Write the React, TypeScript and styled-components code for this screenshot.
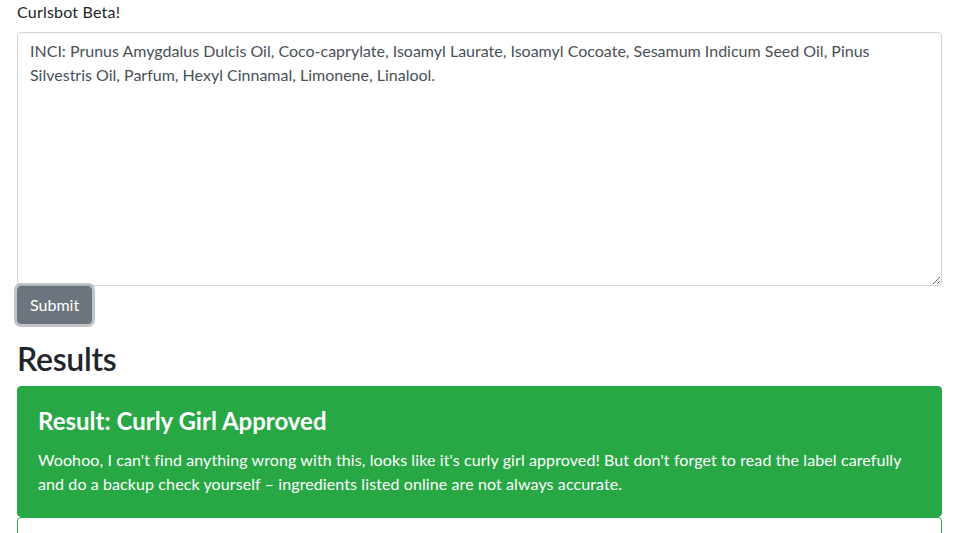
import React, { useState } from 'react';
import styled, { createGlobalStyle } from 'styled-components';

const GlobalStyle = createGlobalStyle`
  * {
    box-sizing: border-box;
  }

  body {
    margin: 0;
    font-family: Lato, "Noto Sans", sans-serif;
    font-size: 16px;
    line-height: 1.5;
    color: #212529;
    background-color: #ffffff;
  }
`;

const Page = styled.div`
  padding: 0 12px 0 17px;
`;

const Title = styled.div`
  margin-bottom: 8px;
  letter-spacing: 0.2px;
`;

const IngredientsInput = styled.textarea`
  display: block;
  width: 100%;
  height: 254px;
  padding: 6px 12px;
  margin: 0;
  font-family: inherit;
  font-size: 16px;
  line-height: 1.5;
  color: #495057;
  background-color: #ffffff;
  border: 1px solid #ced4da;
  border-radius: 4px;
  resize: both;
  outline: none;
`;

const SubmitButton = styled.button`
  display: inline-block;
  padding: 6px 12px;
  font-family: inherit;
  font-size: 16px;
  line-height: 1.5;
  color: #ffffff;
  background-color: #6c757d;
  border: 1px solid #6c757d;
  border-radius: 4px;
  box-shadow: 0 0 0 3px rgba(130, 138, 145, 0.5);
  cursor: pointer;
  outline: none;
`;

const ResultsHeading = styled.h2`
  margin: 16px 0 8px;
  font-size: 32px;
  font-weight: 600;
  line-height: 1.2;
  letter-spacing: -0.3px;
`;

const ResultCard = styled.div<{ filled?: boolean }>`
  border: 1px solid #28a745;
  border-radius: 4px;
  background-color: ${props => (props.filled ? '#28a745' : '#ffffff')};
  color: ${props => (props.filled ? '#ffffff' : '#212529')};
`;

const CardBody = styled.div`
  padding: 20px;
`;

const CardTitle = styled.h4`
  margin: 0 0 12px;
  font-size: 24px;
  font-weight: 700;
  line-height: 1.2;
`;

const CardText = styled.p`
  margin: 0;
  letter-spacing: 0.1px;
`;

const defaultIngredients =
  'INCI: Prunus Amygdalus Dulcis Oil, Coco-caprylate, Isoamyl Laurate, Isoamyl Cocoate, Sesamum Indicum Seed Oil, Pinus Silvestris Oil, Parfum, Hexyl Cinnamal, Limonene, Linalool.';

export default function App() {
  const [ingredients, setIngredients] = useState(defaultIngredients);

  return (
    <Page>
      <GlobalStyle />
      <Title>Curlsbot Beta!</Title>
      <IngredientsInput
        value={ingredients}
        onChange={(e) => setIngredients(e.target.value)}
      />
      <SubmitButton type="button">Submit</SubmitButton>

      <ResultsHeading>Results</ResultsHeading>
      <ResultCard filled>
        <CardBody>
          <CardTitle>Result: Curly Girl Approved</CardTitle>
          <CardText>
            Woohoo, I can't find anything wrong with this, looks like it's curly girl approved! But
            don't forget to read the label carefully and do a backup check yourself – ingredients
            listed online are not always accurate.
          </CardText>
        </CardBody>
      </ResultCard>
      <ResultCard>
        <CardBody>
          <CardTitle>Ingredients</CardTitle>
        </CardBody>
      </ResultCard>
    </Page>
  );
}
